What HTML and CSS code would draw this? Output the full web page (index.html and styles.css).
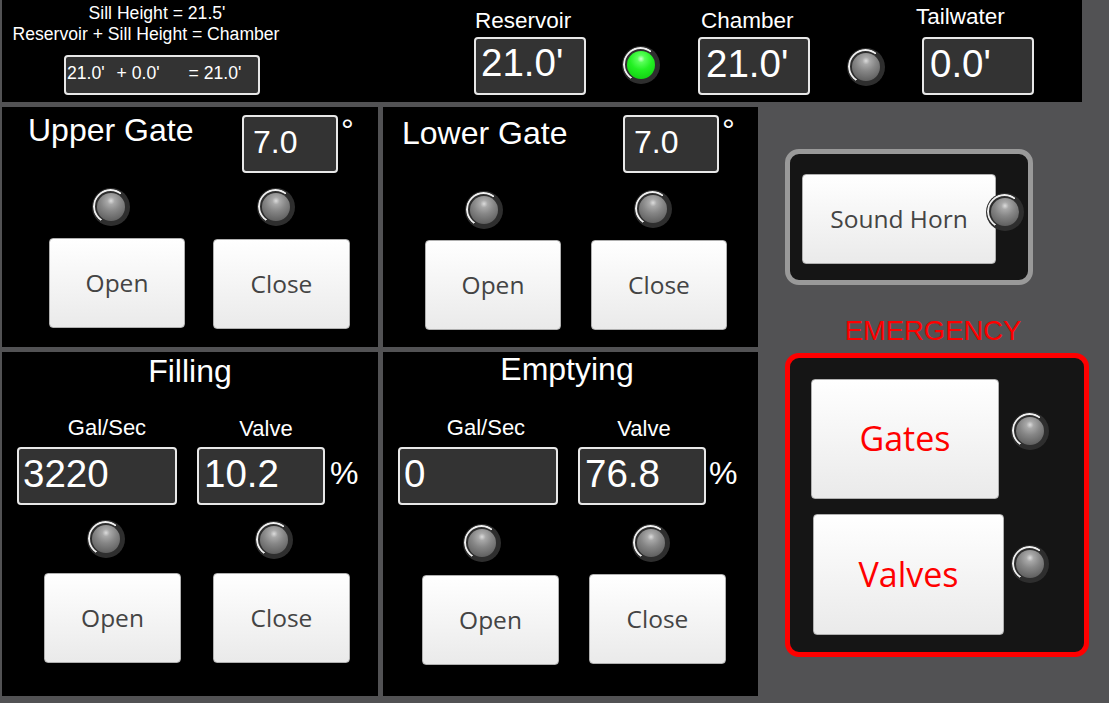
FILE: index.html
```html
<!DOCTYPE html>
<html lang="en">
<head>
  <meta charset="UTF-8">
  <meta name="viewport" content="width=device-width, initial-scale=1">
  <title>Lock Control</title>
  <link rel="stylesheet" href="styles.css">
</head>
<body>
  <header class="topbar">
    <div class="formula">
      <p class="formula-line">Sill Height = 21.5'</p>
      <p class="formula-line formula-long">Reservoir + Sill Height = Chamber</p>
      <div class="formula-box"><span>21.0'</span><span class="term-plus">+ 0.0'</span><span class="term-eq">= 21.0'</span></div>
    </div>
    <div class="stat stat-reservoir">
      <div class="stat-label">Reservoir</div>
      <div class="readout big">21.0'</div>
    </div>
    <div class="led on led-level"></div>
    <div class="stat stat-chamber">
      <div class="stat-label">Chamber</div>
      <div class="readout big">21.0'</div>
    </div>
    <div class="led led-tail"></div>
    <div class="stat stat-tail">
      <div class="stat-label">Tailwater</div>
      <div class="readout big">0.0'</div>
    </div>
  </header>

  <main class="board">
    <section class="panel upper">
      <div class="head">
        <h2>Upper Gate</h2>
        <div class="readout angle">7.0</div>
        <span class="deg">°</span>
      </div>
      <div class="controls">
        <div class="ctl c1"><div class="led"></div><button class="btn">Open</button></div>
        <div class="ctl c2"><div class="led"></div><button class="btn">Close</button></div>
      </div>
    </section>

    <section class="panel lower">
      <div class="head">
        <h2>Lower Gate</h2>
        <div class="readout angle">7.0</div>
        <span class="deg">°</span>
      </div>
      <div class="controls">
        <div class="ctl c1"><div class="led"></div><button class="btn">Open</button></div>
        <div class="ctl c2"><div class="led"></div><button class="btn">Close</button></div>
      </div>
    </section>

    <aside class="side">
      <div class="horn-box">
        <button class="btn horn">Sound Horn</button>
        <div class="led"></div>
      </div>
      <div class="emergency-label">EMERGENCY</div>
      <div class="emergency-box">
        <div class="em-row em-gates"><button class="btn em">Gates</button><div class="led"></div></div>
        <div class="em-row em-valves"><button class="btn em">Valves</button><div class="led"></div></div>
      </div>
    </aside>

    <section class="panel filling">
      <h2 class="center-title">Filling</h2>
      <div class="fields">
        <div class="field flow"><div class="field-label">Gal/Sec</div><div class="readout big">3220</div></div>
        <div class="field valve"><div class="field-label">Valve</div><div class="readout big">10.2</div></div>
        <span class="pct">%</span>
      </div>
      <div class="controls">
        <div class="ctl c1"><div class="led"></div><button class="btn">Open</button></div>
        <div class="ctl c2"><div class="led"></div><button class="btn">Close</button></div>
      </div>
    </section>

    <section class="panel emptying">
      <h2 class="center-title">Emptying</h2>
      <div class="fields">
        <div class="field flow"><div class="field-label">Gal/Sec</div><div class="readout big">0</div></div>
        <div class="field valve"><div class="field-label">Valve</div><div class="readout big">76.8</div></div>
        <span class="pct">%</span>
      </div>
      <div class="controls">
        <div class="ctl c1"><div class="led"></div><button class="btn">Open</button></div>
        <div class="ctl c2"><div class="led"></div><button class="btn">Close</button></div>
      </div>
    </section>
  </main>
</body>
</html>
```

FILE: styles.css
```css
html, body {
  height: 703px;
}
body {
  margin: 0;
  padding: 0 0 0 2px;
  box-sizing: border-box;
  overflow: hidden;
  background: #525254;
  color: #fff;
  font-family: "Liberation Sans", Arial, sans-serif;
}
h2, p {
  margin: 0;
  font-weight: normal;
}

/* top bar */
.topbar {
  display: flex;
  align-items: flex-start;
  width: 1080px;
  height: 102px;
  background: #000;
}
.formula {
  width: 472px;
  flex: none;
  padding-top: 3px;
  box-sizing: border-box;
}
.formula-line {
  width: 310px;
  font-size: 17.6px;
  line-height: 21px;
  text-align: center;
}
.formula-long {
  width: 288px;
}
.formula-box {
  width: 196px;
  height: 40px;
  margin: 10px 0 0 62px;
  padding-left: 1px;
  box-sizing: border-box;
  border: 2px solid #e8e8e8;
  border-radius: 4px;
  background: #333;
  font-size: 17.6px;
  line-height: 32px;
  white-space: nowrap;
}
.term-plus {
  margin-left: 12px;
}
.term-eq {
  margin-left: 29px;
}
.stat {
  width: 112px;
  flex: none;
}
.stat-label {
  height: 37px;
  font-size: 22.5px;
  line-height: 42px;
  white-space: nowrap;
}
.stat-reservoir .stat-label {
  padding-left: 1px;
}
.stat-chamber .stat-label {
  padding-left: 3px;
}
.stat-tail .stat-label {
  margin-left: -6px;
  line-height: 34px;
}
.stat-reservoir .big {
  line-height: 48px;
}
.led-level {
  margin: 46px 38px 0 36px;
}
.led-tail {
  margin: 48px 37px 0 37px;
}

/* readouts */
.readout {
  box-sizing: border-box;
  border: 2px solid #e8e8e8;
  border-radius: 4px;
  background: #333;
  height: 58px;
}
.big {
  padding-left: 5px;
  font-size: 38.5px;
  line-height: 50px;
}
.stat-chamber .big,
.stat-tail .big {
  padding-left: 6px;
}
.flow .big {
  padding-left: 4px;
}
.angle {
  width: 96px;
  padding-left: 9px;
  font-size: 32px;
  line-height: 50px;
}
.deg {
  margin-left: 3px;
  font-size: 32px;
  line-height: 30px;
}
.pct {
  margin-bottom: 7px;
  font-size: 32px;
  line-height: 50px;
}

/* led */
.led {
  position: relative;
  flex: none;
  width: 38px;
  height: 38px;
  border-radius: 50%;
  background: #2e2e2e;
}
.led::before {
  content: "";
  position: absolute;
  inset: 5px;
  border-radius: 50%;
  background: radial-gradient(circle at 50% 28%, #dcdcdc 0, #a8a8a8 15%, #868686 42%, #585858 90%);
}
.led::after {
  content: "";
  position: absolute;
  inset: 1px 2px 2px 1px;
  border: 2px solid #f0f0f0;
  border-radius: 50%;
  -webkit-mask: conic-gradient(from 213deg, #000 0 186deg, transparent 0);
  mask: conic-gradient(from 213deg, #000 0 186deg, transparent 0);
}
.led.on::before {
  background: radial-gradient(circle at 50% 28%, #d0ffd0 0, #58ff58 15%, #22f022 45%, #10cc10 92%);
}

/* buttons */
.btn {
  display: block;
  flex: none;
  width: 137px;
  height: 90px;
  padding: 0 0 2px;
  border: 1px solid #b0b0b0;
  border-radius: 4px;
  background: linear-gradient(#fff, #eaeaea);
  color: #444;
  font-family: "Open Sans", sans-serif;
  font-size: 24.5px;
}

/* board */
.board {
  display: grid;
  grid-template-columns: 376px 375px 1fr;
  grid-template-rows: 240px 344px;
  gap: 5px;
  margin-top: 5px;
}
.panel {
  background: #000;
}
.head {
  display: flex;
  align-items: flex-start;
  padding-top: 8px;
}
.head h2 {
  width: 240px;
  flex: none;
  box-sizing: border-box;
  font-size: 32px;
  line-height: 30px;
}
.upper h2 {
  padding-left: 26px;
}
.lower h2 {
  padding-left: 19px;
  line-height: 36px;
}
.controls {
  display: flex;
  align-items: flex-start;
}
.center-title {
  text-align: center;
  font-size: 32px;
  line-height: 38px;
}
.emptying .center-title {
  padding-right: 7px;
  line-height: 34px;
}
.fields {
  display: flex;
  align-items: flex-end;
  gap: 20px;
  margin: 24px 0 0 15px;
}
.emptying .fields {
  margin-top: 28px;
}
.fields .pct {
  margin-left: -15px;
}
.emptying .fields .pct {
  margin-left: -17px;
}
.field-label {
  margin-bottom: 5px;
  font-size: 22px;
  line-height: 28px;
  text-align: center;
}
.valve .field-label {
  margin-bottom: 4px;
}
.flow {
  width: 160px;
}
.valve {
  width: 128px;
}
.flow .field-label {
  padding-left: 20px;
}
.valve .field-label {
  padding-left: 10px;
}
.emptying .flow .field-label {
  padding-left: 16px;
}
.emptying .valve .field-label {
  padding-left: 4px;
}

/* control offsets, the panels are not laid out evenly */
.upper .controls { margin-top: 15px; }
.upper .c1 { margin-left: 47px; }
.upper .c1 .led { margin-left: 43px; }
.upper .c1 .btn { margin-top: 12px; width: 136px; }
.upper .c2 { margin-left: 28px; }
.upper .c2 .led { margin-left: 44px; }
.upper .c2 .btn { margin-top: 13px; }

.lower .controls { margin-top: 18px; }
.lower .c1 { margin-left: 42px; }
.lower .c1 .led { margin-left: 40px; }
.lower .c1 .btn { margin-top: 11px; width: 136px; }
.lower .c2 { margin-left: 30px; margin-top: -1px; }
.lower .c2 .led { margin-left: 43px; }
.lower .c2 .btn { margin-top: 12px; width: 136px; }

.filling .controls { margin-top: 15px; }
.filling .c1 { margin-left: 42px; }
.filling .c1 .led { margin-left: 43px; }
.filling .c1 .btn { margin-top: 15px; }
.filling .c2 { margin-left: 32px; margin-top: 1px; }
.filling .c2 .led { margin-left: 42px; }
.filling .c2 .btn { margin-top: 14px; }

.emptying .controls { margin-top: 19px; }
.emptying .c1 { margin-left: 39px; }
.emptying .c1 .led { margin-left: 41px; }
.emptying .c1 .btn { margin-top: 13px; }
.emptying .c2 { margin-left: 30px; }
.emptying .c2 .led { margin-left: 43px; }
.emptying .c2 .btn { margin-top: 12px; }

/* right column */
.side {
  grid-column: 3;
  grid-row: 1 / 3;
  padding: 42px 0 0 22px;
}
.horn-box {
  display: flex;
  align-items: flex-start;
  box-sizing: border-box;
  width: 248px;
  height: 136px;
  padding: 20px 12px;
  border: 5px solid #999;
  border-radius: 14px;
  background: #151515;
}
.btn.horn {
  width: 194px;
}
.horn-box .led {
  margin: 19px 0 0 -10px;
}
.emergency-label {
  width: 296px;
  margin-top: 30px;
  color: #f00;
  font-size: 27.4px;
  line-height: 32px;
  text-align: center;
}
.emergency-box {
  box-sizing: border-box;
  width: 304px;
  height: 304px;
  margin-top: 6px;
  padding: 21px 0 0 21px;
  border: 5px solid #f00;
  border-radius: 14px;
  background: #151515;
}
.em-row {
  display: flex;
  align-items: flex-start;
}
.btn.em {
  color: #f00;
  font-size: 34px;
}
.em-gates .btn {
  width: 188px;
  height: 120px;
}
.em-gates .led {
  margin: 33px 0 0 12px;
}
.em-valves {
  margin: 15px 0 0 2px;
}
.em-valves .btn {
  width: 191px;
  height: 121px;
}
.em-valves .led {
  margin: 31px 0 0 7px;
}
```
